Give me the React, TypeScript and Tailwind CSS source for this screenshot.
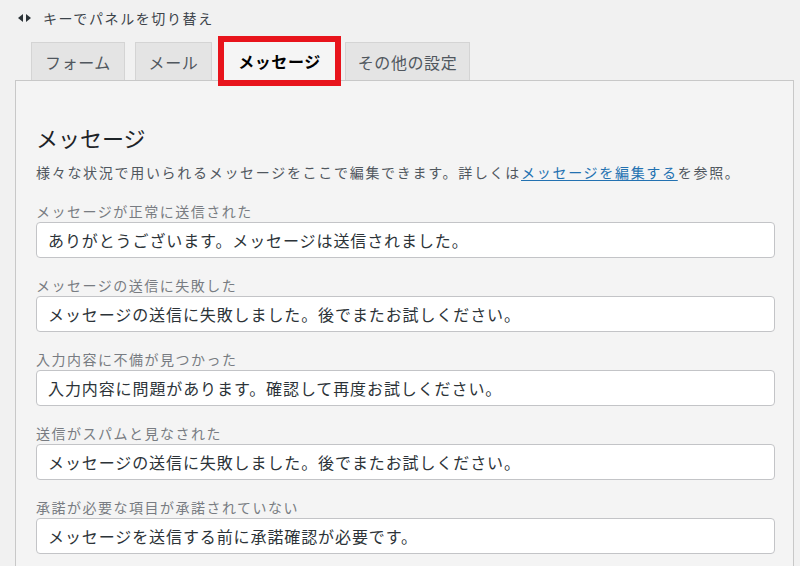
import React from 'react';

const fields = [
  { label: 'メッセージが正常に送信された', value: 'ありがとうございます。メッセージは送信されました。' },
  { label: 'メッセージの送信に失敗した', value: 'メッセージの送信に失敗しました。後でまたお試しください。' },
  { label: '入力内容に不備が見つかった', value: '入力内容に問題があります。確認して再度お試しください。' },
  { label: '送信がスパムと見なされた', value: 'メッセージの送信に失敗しました。後でまたお試しください。' },
  { label: '承諾が必要な項目が承諾されていない', value: 'メッセージを送信する前に承諾確認が必要です。' },
];

function App() {
  return (
    <div
      className="min-h-screen bg-[#f1f1f1] pl-[15px] pr-[6px] pt-[8px]"
      style={{ fontFamily: '"Noto Sans CJK JP", "Noto Sans", sans-serif' }}
    >
      {/* keyboard hint */}
      <div className="flex items-center h-[20px] pl-[3px] text-[14px] tracking-[1.6px] text-[#3c434a]">
        <svg width="13" height="8" viewBox="0 0 13 8" className="mr-[12px]">
          <polygon points="0,4 5,0 5,8" fill="#2c3338" />
          <polygon points="13,4 8,0 8,8" fill="#2c3338" />
        </svg>
        <span>キーでパネルを切り替え</span>
      </div>

      {/* tabs */}
      <div className="flex items-end pl-[16px] mt-[14px] text-[16px] tracking-[0.6px]">
        <div className="w-[94px] h-[38px] flex items-center justify-center bg-[#e4e4e4] border border-b-0 border-[#d4d4d4] text-[#50575e]">
          フォーム
        </div>
        <div className="ml-[10px] w-[77px] h-[38px] flex items-center justify-center bg-[#e4e4e4] border border-b-0 border-[#d4d4d4] text-[#50575e]">
          メール
        </div>
        <div className="ml-[12px] w-[111px] h-[38px] flex items-center justify-center bg-[#f5f5f5] font-bold text-black outline-solid outline-[6px] outline-[#e8141c] relative z-10">
          メッセージ
        </div>
        <div className="ml-[10px] w-[125px] h-[38px] flex items-center justify-center bg-[#e4e4e4] border border-b-0 border-[#d4d4d4] text-[#50575e]">
          その他の設定
        </div>
      </div>

      {/* panel */}
      <div className="border border-[#c8c8c8] bg-[#f4f4f4] pl-[20px] pr-[18px] pt-[41px] pb-[20px]">
        <h2 className="text-[22px] leading-[30px] text-[#1d2327]">メッセージ</h2>
        <p className="mt-[10px] text-[14px] leading-[20px] tracking-[1.7px] text-[#50575e]">
          様々な状況で用いられるメッセージをここで編集できます。詳しくは
          <a href="#" className="text-[#2271b1] underline underline-offset-2">
            メッセージを編集する
          </a>
          を参照。
        </p>

        <div className="mt-[19px] flex flex-col gap-[17px]">
          {fields.map((f, i) => (
            <div key={i}>
              <div className="text-[14px] leading-[20px] tracking-[1.5px] text-[#787c82]">{f.label}</div>
              <div className="mt-[1px] h-[36px] flex items-center bg-white border border-[#c3c4c7] rounded-[4px] px-[11px] text-[16px] tracking-[0.9px] text-[#2c3338]">
                {f.value}
              </div>
            </div>
          ))}
        </div>
      </div>
    </div>
  );
}

export default App;
